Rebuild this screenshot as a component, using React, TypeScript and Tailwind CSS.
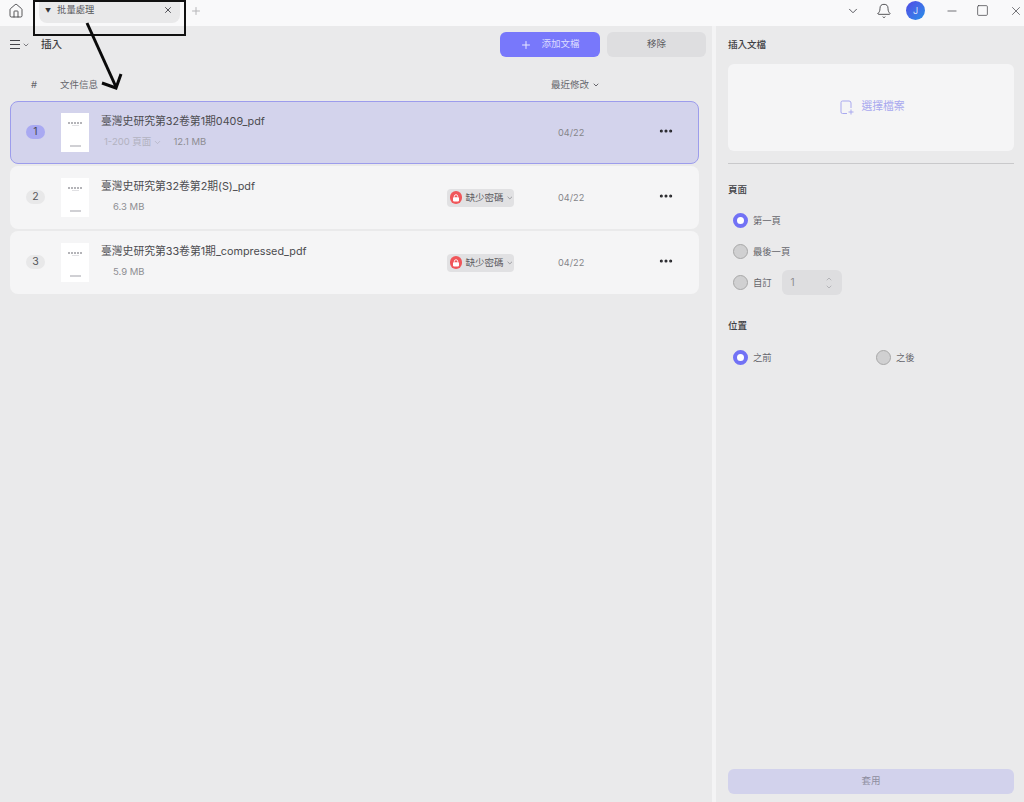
import { Bell, ChevronDown, ChevronUp, Plus, X, Minus, Square, Home, Ellipsis } from "lucide-react";

const files = [
  { id: 1, name: "臺灣史研究第32卷第1期0409_pdf", size: "12.1 MB", range: "1-200 頁面", locked: false },
  { id: 2, name: "臺灣史研究第32卷第2期(S)_pdf", size: "6.3 MB", range: "", locked: true },
  { id: 3, name: "臺灣史研究第33卷第1期_compressed_pdf", size: "5.9 MB", range: "", locked: true },
];

function Thumb() {
  return (
    <div className="w-[28px] h-[39px] bg-white flex flex-col items-center justify-between pt-[9px] pb-[5px] shrink-0">
      <div className="flex flex-col items-center gap-[1px]">
        <div className="flex gap-[1px]">
          <div className="w-[2px] h-[2px] bg-[#b4b4b8]" />
          <div className="w-[2px] h-[2px] bg-[#b4b4b8]" />
          <div className="w-[2px] h-[2px] bg-[#b4b4b8]" />
          <div className="w-[2px] h-[2px] bg-[#b4b4b8]" />
          <div className="w-[2px] h-[2px] bg-[#b4b4b8]" />
        </div>
        <div className="w-[7px] h-[1px] bg-[#e0e0e3]" />
      </div>
      <div className="w-[11px] h-[2px] bg-[#d0d0d4]" />
    </div>
  );
}

function Row({ file }: { file: (typeof files)[number] }) {
  const selected = !file.locked;
  return (
    <div
      className={
        selected
          ? "h-[63px] rounded-lg border border-[#9c9cec] bg-[#d3d3ec] flex items-center"
          : "h-[63px] rounded-lg bg-[#f5f5f6] flex items-center border border-transparent"
      }
    >
      <div className="w-[50px] flex justify-start pl-[15px] shrink-0 -mt-[2px]">
        <span
          className={
            selected
              ? "w-[19px] h-[14px] rounded-full bg-[#a9a9f2] text-[10.5px] leading-[14px] text-center text-[#4a4a55]"
              : "w-[19px] h-[14px] rounded-full bg-[#e8e8e9] text-[10.5px] leading-[14px] text-center text-[#55555a]"
          }
        >
          {file.id}
        </span>
      </div>
      <Thumb />
      <div className="ml-[12px] w-[346px] shrink-0 flex flex-col gap-[4px] -mt-[3px]">
        <div className="text-[10.8px] leading-[18px] text-[#4c4c50] whitespace-nowrap">{file.name}</div>
        <div className="flex items-center text-[9.5px] leading-[14px] text-[#8d8d92]">
          {file.range ? (
            <>
              <span className="ml-[3px] text-[#b2b2c0] flex items-center gap-[2px]">
                {file.range}
                <ChevronDown size={9} />
              </span>
              <span className="ml-[11px]">{file.size}</span>
            </>
          ) : (
            <span className="ml-[12px]">{file.size}</span>
          )}
        </div>
      </div>
      <div className="w-[111px] shrink-0">
        {file.locked && (
          <div className="w-[67px] h-[18px] rounded bg-[#e1e1e3] flex items-center pl-[3px] gap-[3px]">
            <span className="w-[13px] h-[13px] rounded-full bg-[#f0565a] flex items-center justify-center">
              <svg width="8" height="8" viewBox="0 0 8 8" fill="none">
                <path d="M2.3 3.4V2.4a1.7 1.7 0 0 1 3.4 0v1" stroke="#ffffff" strokeWidth="0.9" />
                <rect x="1" y="3.2" width="6" height="4.2" rx="0.8" fill="#ffffff" />
              </svg>
            </span>
            <span className="text-[9.5px] leading-none text-[#5b5b60] whitespace-nowrap">缺少密碼</span>
            <ChevronDown size={8} color="#77777c" />
          </div>
        )}
      </div>
      <div className="w-[100px] text-[9.2px] text-[#85858a] shrink-0">04/22</div>
      <Ellipsis size={16} color="#26262a" strokeWidth={2.6} className="-mt-[4px]" />
    </div>
  );
}

function Radio({ on, label }: { on?: boolean; label: string }) {
  return (
    <div className="flex items-center gap-[5px]">
      {on ? (
        <span className="w-[15px] h-[15px] rounded-full border-[4px] border-[#7272f5] bg-white" />
      ) : (
        <span className="w-[15px] h-[15px] rounded-full border border-[#a8a8a8] bg-[#d0d0d1]" />
      )}
      <span className="text-[9.3px] text-[#66666b] whitespace-nowrap">{label}</span>
    </div>
  );
}

export default function App() {
  return (
    <div
      className="relative w-[1024px] h-[802px] overflow-hidden bg-[#eaeaeb] flex flex-col"
      style={{ fontFamily: "Inter, 'Noto Sans CJK TC', sans-serif" }}
    >
      {/* top bar */}
      <div className="h-[26px] bg-[#f9f9fa] flex items-center shrink-0 pb-[5px]">
        <Home size={16} strokeWidth={1.3} color="#3c3c40" className="ml-[8px]" />
        <div className="ml-[15px] w-[141px] h-[23px] mt-[2px] pb-[3px] rounded-b-lg bg-[#e9e9ea] flex items-center pl-[6px] pr-[7px]">
          <span className="text-[6px] text-[#333338]">▼</span>
          <span className="ml-[6px] text-[9.3px] text-[#55555a]">批量處理</span>
          <X size={10} color="#33333a" strokeWidth={2} className="ml-auto" />
        </div>
        <Plus size={12} color="#b5b5b8" className="ml-[10px]" />
        <div className="ml-auto flex items-center">
          <ChevronDown size={14} strokeWidth={1.5} color="#44444a" />
          <Bell size={16} strokeWidth={1.2} color="#2c2c30" className="ml-[16px]" />
          <div className="ml-[14px] w-[19px] h-[19px] rounded-full bg-gradient-to-br from-[#4f46e5] to-[#1f8fe8] text-white text-[9px] font-light leading-[19px] text-center">
            J
          </div>
          <Minus size={14} strokeWidth={1.4} color="#55555a" className="ml-[20px]" />
          <Square size={13} strokeWidth={1.3} color="#3c3c40" className="ml-[17px]" />
          <X size={14} strokeWidth={1.2} color="#3c3c40" className="ml-[20px] mr-[1px]" />
        </div>
      </div>

      <div className="flex flex-1 min-h-0">
        {/* file list */}
        <div className="w-[712px] shrink-0 pl-[10px] pr-[13px] pt-[6px]">
          <div className="h-[25px] flex items-center">
            <div className="flex items-center gap-[2px]">
              <div className="flex flex-col gap-[3px]">
                <div className="w-[10px] h-[1px] bg-[#44444a]" />
                <div className="w-[10px] h-[1px] bg-[#44444a]" />
                <div className="w-[10px] h-[1px] bg-[#44444a]" />
              </div>
              <ChevronDown size={8} color="#44444a" />
            </div>
            <span className="ml-[11px] text-[10.5px] font-medium text-[#3f3f44]">插入</span>
            <button className="ml-auto w-[100px] h-[25px] rounded-md bg-[#7878fb] flex items-center justify-center gap-[9px] text-[9.5px] text-[#dcdcff]">
              <Plus size={12} color="#e8e8ff" />
              添加文檔
            </button>
            <button className="ml-[7px] w-[99px] h-[25px] rounded-md bg-[#dedee0] text-[9.5px] text-[#5c5c60] -mr-[7px]">
              移除
            </button>
          </div>
          <div className="h-[44px] pt-[12px] flex items-center text-[9.5px] text-[#66666b]">
            <span className="ml-[21px] w-[29px]">#</span>
            <span>文件信息</span>
            <span className="ml-[453px] flex items-center gap-[3px]">
              最近修改
              <ChevronDown size={8} strokeWidth={3} />
            </span>
          </div>
          <div className="flex flex-col gap-[2px]">
            {files.map((f) => (
              <Row key={f.id} file={f} />
            ))}
          </div>
        </div>

        <div className="w-[4px] bg-[#f4f4f5] shrink-0" />

        {/* right panel */}
        <div className="flex-1 pl-[12px] pr-[10px] pt-[13px] pb-[8px] flex flex-col">
          <div className="text-[9.5px] font-medium text-[#3f3f44] leading-[12px]">插入文檔</div>
          <div className="mt-[13px] h-[87px] rounded-md bg-[#f5f5f6] flex items-center justify-center gap-[7px] pl-[3px] text-[10.8px] text-[#a9a9ef]">
            <svg width="14" height="15" viewBox="0 0 14 15" fill="none" stroke="#a9a9ef" strokeWidth="1">
              <path d="M7 13.5H2.5a1.5 1.5 0 0 1-1.5-1.5V2.5A1.5 1.5 0 0 1 2.5 1h6.5a2 2 0 0 1 2 2v5" />
              <path d="M11 9.5v5M8.5 12h5" />
            </svg>
            選擇檔案
          </div>
          <div className="mt-[12px] h-[1px] bg-[#c9c9cb]" />
          <div className="mt-[20px] text-[9.5px] font-medium text-[#3f3f44] leading-[12px]">頁面</div>
          <div className="mt-[17px] ml-[5px] flex flex-col gap-[16px]">
            <Radio on label="第一頁" />
            <Radio label="最後一頁" />
            <div className="flex items-center h-[15px]">
              <Radio label="自訂" />
              <div className="ml-[10px] w-[60px] h-[25px] rounded-md bg-[#dedee0] flex items-center justify-between pl-[9px] pr-[9px] text-[10px] text-[#8c8c90]">
                1
                <div className="flex flex-col">
                  <ChevronUp size={8} color="#a0a0a4" />
                  <ChevronDown size={8} color="#a0a0a4" />
                </div>
              </div>
            </div>
          </div>
          <div className="mt-[30px] text-[9.5px] font-medium text-[#3f3f44] leading-[12px]">位置</div>
          <div className="mt-[18px] ml-[5px] flex items-center">
            <div className="w-[143px]">
              <Radio on label="之前" />
            </div>
            <Radio label="之後" />
          </div>
          <button className="mt-auto h-[25px] rounded-md bg-[#d2d2ec] text-[9.5px] text-[#8e8ea0]">套用</button>
        </div>
      </div>

      {/* annotation drawn on top of the screenshot */}
      <div className="absolute left-[33px] top-0 w-[153px] h-[36px] border-2 border-[#111111] pointer-events-none" />
      <svg className="absolute left-0 top-0 pointer-events-none" width="200" height="110" fill="none" stroke="#0a0a0a" strokeWidth="3">
        <path d="M87 23 L116 87" />
        <path d="M102 83 L116 88 L121 74" />
      </svg>
    </div>
  );
}
